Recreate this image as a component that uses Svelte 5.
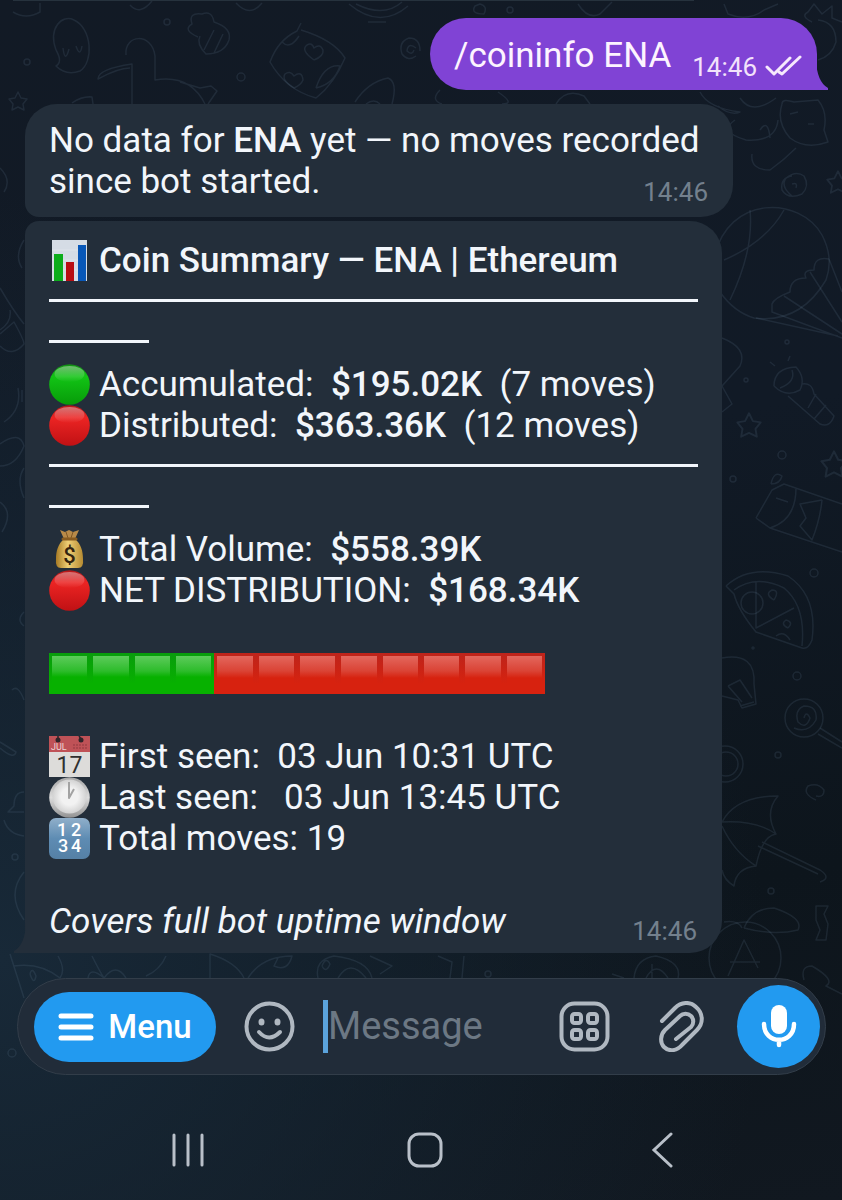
<script>
	const summary = [
		{ icon: 'green', label: 'Accumulated:  ', value: '$195.02K', note: '  (7 moves)' },
		{ icon: 'red', label: 'Distributed:  ', value: '$363.36K', note: '  (12 moves)' }
	];

	const totals = [
		{ icon: 'bag', label: 'Total Volume:  ', value: '$558.39K', note: '' },
		{ icon: 'red', label: 'NET DISTRIBUTION:  ', value: '$168.34K', note: '' }
	];

	const history = [
		{ icon: 'calendar', label: 'First seen:  03 Jun 10:31 UTC', value: '', note: '' },
		{ icon: 'clock', label: 'Last seen:   03 Jun 13:45 UTC', value: '', note: '' },
		{ icon: 'numbers', label: 'Total moves: 19', value: '', note: '' }
	];

	// 4 accumulated, 8 distributed
	const cells = Array.from({ length: 12 }, (_, i) => (i < 4 ? 'up' : 'down'));

	const stars = [
		[18, 101, 1],
		[749, 425, 1.3],
		[838, 182, 1.2],
		[834, 464, 1.4]
	];

	const dots = [
		[27, 62, 3], [167, 22, 3], [241, 77, 4], [510, 10, 3], [782, 455, 4],
		[733, 479, 3], [814, 573, 4], [797, 676, 4], [778, 755, 3], [771, 891, 3],
		[15, 857, 3], [746, 380, 2], [787, 342, 2], [753, 648, 1], [488, 974, 3], [12, 1053, 4]
	];

	let message = '';
</script>

{#snippet emoji(name)}
	<svg class="emoji" viewBox="0 0 41 41" aria-hidden="true">
		{#if name === 'green'}
			<circle cx="20.5" cy="20.5" r="20.3" fill="url(#green-ball)" />
			<ellipse cx="20.5" cy="10" rx="15" ry="8" fill="url(#shine)" />
		{:else if name === 'red'}
			<circle cx="20.5" cy="20.5" r="20.3" fill="url(#red-ball)" />
			<ellipse cx="20.5" cy="10" rx="15" ry="8" fill="url(#shine)" />
		{:else if name === 'chart'}
			<rect x="3" y="0" width="35" height="41" fill="#d5dce5" />
			<path d="M3 10H38M3 20H38M3 30H38" stroke="#dfe4ea" stroke-width="1" />
			<rect x="5" y="14" width="9" height="27" fill="#0cad1b" />
			<rect x="17" y="22" width="8" height="19" fill="#b80d12" />
			<rect x="29" y="5" width="8" height="36" fill="#0757b8" />
		{:else if name === 'bag'}
			<path d="M11 1 16 3 20 1 24 3 30 1 26 10H15Z" fill="#b98a48" />
			<path d="M17 3 19 9M24 3 22 9" stroke="#7f5624" stroke-width="1" />
			<path d="M15 10C9 15 7 22 7 30Q6 39 12 39H29Q35 39 34 30C34 22 32 15 26 10Z" fill="url(#gold)" />
			<path d="M14 10H27" stroke="#8a5c20" stroke-width="3" stroke-linecap="round" />
			<text x="20.5" y="34" text-anchor="middle" font-size="22" font-weight="500" fill="#33230f">$</text>
		{:else if name === 'calendar'}
			<rect width="41" height="41" fill="#dddcda" />
			<rect width="41" height="16" fill="#bf5257" />
			<path d="M24 12H39M24 9H39" stroke="#a8454b" stroke-width="2" stroke-dasharray="2 1" />
			<circle cx="9" cy="4" r="2.5" fill="#302529" />
			<circle cx="32" cy="4" r="2.5" fill="#302529" />
			<path d="M9 3V0M32 3 30 0" stroke="#302529" stroke-width="1.5" />
			<text x="2" y="14" font-size="9" fill="#eed5d5">JUL</text>
			<text x="20.5" y="37" text-anchor="middle" font-size="23" fill="#303030">17</text>
		{:else if name === 'clock'}
			<circle cx="20.5" cy="20.5" r="20.3" fill="url(#rim)" />
			<circle cx="20.5" cy="19.5" r="17" fill="url(#face)" />
			<path d="M20 5V21L25 12" fill="none" stroke="#a3a3a3" stroke-width="2" stroke-linejoin="round" />
		{:else if name === 'numbers'}
			<rect width="41" height="41" rx="7" fill="url(#steel)" />
			<g font-size="18" font-weight="500" fill="#fff" text-anchor="middle">
				<text x="13" y="18">1</text><text x="27" y="18">2</text>
				<text x="14" y="34">3</text><text x="27" y="34">4</text>
			</g>
		{/if}
	</svg>
{/snippet}

{#snippet row(item)}
	<p class="row">
		{@render emoji(item.icon)}
		<span class="text">{item.label}<strong>{item.value}</strong>{item.note}</span>
	</p>
{/snippet}

{#snippet divider()}
	<div class="divider">
		<hr />
		<hr class="short" />
	</div>
{/snippet}

<!-- shared gradients -->
<svg class="defs" width="0" height="0" aria-hidden="true">
	<defs>
		<linearGradient id="green-ball" x2="0" y2="1">
			<stop offset="0" stop-color="#138c14" /><stop offset=".3" stop-color="#12c415" /><stop offset="1" stop-color="#079b09" />
		</linearGradient>
		<linearGradient id="red-ball" x2="0" y2="1">
			<stop offset="0" stop-color="#b3181a" /><stop offset=".3" stop-color="#ec2423" /><stop offset="1" stop-color="#c01114" />
		</linearGradient>
		<linearGradient id="shine" x2="0" y2="1">
			<stop offset="0" stop-color="#fff" stop-opacity=".4" /><stop offset="1" stop-color="#fff" stop-opacity="0" />
		</linearGradient>
		<linearGradient id="gold">
			<stop offset="0" stop-color="#a77a23" /><stop offset=".45" stop-color="#efcf76" /><stop offset="1" stop-color="#b58b31" />
		</linearGradient>
		<linearGradient id="rim" x2="0" y2="1">
			<stop offset="0" stop-color="#a6a6a6" /><stop offset=".5" stop-color="#dcdcdc" /><stop offset="1" stop-color="#929292" />
		</linearGradient>
		<radialGradient id="face">
			<stop offset=".5" stop-color="#f2f2f2" /><stop offset="1" stop-color="#d2d2d2" />
		</radialGradient>
		<linearGradient id="steel" x2="0" y2="1">
			<stop offset="0" stop-color="#90afca" /><stop offset=".5" stop-color="#5e8cb3" /><stop offset="1" stop-color="#5580a5" />
		</linearGradient>
	</defs>
</svg>

<main class="screen">
	<svg class="doodles" viewBox="0 0 842 1200" preserveAspectRatio="xMidYMin slice" aria-hidden="true">
		{#each stars as [x, y, s]}
			<path transform="translate({x} {y}) scale({s})" d="M0-9 3-3 9-2 5 3 6 9 0 6-6 9-5 3-9-2-3-3Z" />
		{/each}
		{#each dots as [x, y, r]}
			<circle cx={x} cy={y} {r} />
		{/each}
		<!-- ghost, duck, bee, pillow -->
		<path d="M13 12Q26 20 40 12V3M130 5Q140 16 152 1M236 3Q250 18 262 3" />
		<path d="M56 50C48 28 62 14 74 20C92 28 94 62 80 71Q66 76 56 66Q63 62 56 50M63 48Q65 64 69 49M76 46Q80 58 82 46" />
		<path d="M132 104V64Q98 69 98 79Q118 68 130 68M126 55C124 34 152 32 155 56V80Q190 74 205 104M180 82 200 88 211 86 217 91 208 104M72 103Q82 96 92 97L93 104" />
		<path d="M198 37Q182 30 192 24Q188 12 202 14Q212 10 214 22Q232 28 229 40Q224 54 206 54Q196 44 200 36M204 50 214 30M214 53 223 34" />
		<path d="M301 23 297 31Q278 40 270 62Q286 90 316 98Q334 84 345 58Q334 40 301 30M282 42Q290 50 299 36M316 88Q324 64 340 66Q334 84 316 88" />
		<path d="M314 60Q300 50 307 45Q312 42 314 48Q320 43 323 50Q324 56 314 60M294 88Q281 80 285 74Q290 70 294 76Q302 70 303 80Q301 85 294 88" />
		<path d="M349 4Q380 30 408 6M356 4Q384 18 402 2M368 22H386M355 102Q368 82 388 78Q398 82 392 104M366 104Q374 98 380 104" />
		<path d="M420 51Q420 38 409 38Q398 42 402 54Q408 62 416 56M416 48Q408 42 407 51Q412 56 414 50" />
		<path d="M475 6Q470 14 484 14Q488 6 480 4ZM578 4Q588 20 600 14L612 2M724 4 728 14Q748 22 764 10L778 4M440 90Q430 100 442 104M498 92Q516 104 502 104M556 104Q566 88 584 96L590 104" />
		<!-- strawberry and cat -->
		<path d="M812 22Q800 16 808 12L814 4 822 14 832 6 832 18 842 22M818 20Q836 22 836 42Q832 56 818 60" />
		<path d="M700 92Q708 108 740 112Q730 116 718 106M740 98Q752 116 776 98M782 104Q782 98 794 102L818 100Q828 112 824 130L828 142Q806 150 790 138Q776 122 782 104M735 120Q718 132 746 140Q776 142 778 120M752 154Q750 170 770 170Q784 160 796 148M760 130Q768 118 770 138M790 114 798 112M808 124H814" />
		<path d="M792 196Q780 186 786 178Q796 170 804 176Q810 186 802 194Q788 200 782 190Q780 178 792 176M792 184Q798 182 796 188" />
		<!-- balloon -->
		<path d="M714 258C728 194 800 196 822 235Q834 258 826 280Q800 324 754 318Q734 312 720 292" />
		<path d="M750 210Q754 250 730 300M784 210Q766 242 724 260M829 259Q814 256 814 270Q802 270 806 278Q790 278 790 292Q774 298 772 304L772 312 842 338M829 259 842 292M810 272 842 322M784 296 842 334M756 318 838 336" />
		<!-- cloud, torch, wrapper -->
		<path d="M722 338Q748 348 740 366L722 386 732 404 722 412M788 361 790 356M770 362 775 366" />
		<path d="M774 386Q774 368 796 367Q806 378 800 390Q786 398 774 386M780 388Q796 382 792 370M802 384Q812 382 814 394L834 416Q830 428 820 424L788 396M816 394 808 408M826 405 814 419" />
		<path d="M756 518 772 490 784 484 842 504M756 518 770 528 842 552M770 528Q796 520 796 488M776 498 788 502M822 500 800 504 806 518 800 526 812 540Q820 520 822 500M771 484Q774 470 782 476 780 484 771 484" />
		<!-- pizza, bulb, lollipop -->
		<path d="M726 586Q750 564 788 576Q818 596 812 640Q808 650 802 648L756 632Q738 610 734 594L726 586M734 590Q756 574 784 588Q806 606 802 646M756 582V628L794 608" />
		<circle cx="752" cy="603" r="11" />
		<path d="M774 600Q764 594 772 590Q780 590 774 600M788 628Q780 624 786 620Q794 622 788 628M776 636Q784 630 790 640" />
		<path d="M722 658Q756 652 754 684L756 704 742 708 738 700 722 696M728 686 740 680 752 698M728 686 742 702M740 706 754 702" />
		<circle cx="804" cy="718" r="19" />
		<path d="M804 718Q806 710 810 718Q806 730 798 722Q794 710 804 706Q818 706 816 720Q808 734 794 728M820 728 842 742M818 734 842 748" />
		<circle cx="725" cy="764" r="18" />
		<circle cx="726" cy="764" r="12" />
		<path d="M816 800Q802 794 808 786Q818 782 824 790Q824 798 816 796" />
		<!-- umbrella, sweet -->
		<path d="M722 822Q736 796 778 796Q764 812 776 834Q762 836 756 866Q734 852 722 826M722 822Q756 820 776 834M756 866Q736 868 734 886Q724 880 722 870M762 842 820 870Q832 878 820 882M758 846 818 874" />
		<path d="M744 928Q752 908 774 908Q804 918 798 930Q774 936 744 928M816 906H828L824 914 828 924 826 940H816L820 930 816 920Z" />
		<circle cx="745" cy="958" r="36" />
		<path d="M728 976 744 940 758 968M730 962H760M804 980Q800 966 812 966Q836 980 826 986L842 994M724 922Q738 920 742 928" />
		<!-- left edge -->
		<path d="M0 168Q12 180 4 192M24 240Q14 256 22 268M0 288Q14 312 24 324M0 334 14 322Q24 340 24 344Q12 358 0 346M0 330Q12 322 10 310M18 388Q22 410 4 422M22 390V402M0 444Q20 430 24 446Q16 466 0 466M24 468Q16 480 24 498M0 502Q14 512 2 532M24 612Q16 620 24 626M12 690Q18 684 24 700M0 742 16 752Q14 760 0 748" />
		<path d="M24 792Q14 792 14 806L8 812 24 812M4 820Q8 834 24 836M24 872Q6 894 24 920" />
		<!-- strip above the composer -->
		<path d="M10 954 24 998M14 966Q40 962 60 978Q66 970 58 956M30 974Q32 966 36 976Q34 986 30 974M88 978Q90 966 104 978Q116 962 126 978M92 956Q100 972 104 978M166 956Q160 970 146 976M210 978V954Q236 962 244 978M248 978Q262 956 292 956Q288 972 274 966L278 958M318 978Q314 960 334 956Q368 960 372 978M338 978Q350 958 366 978M322 966Q326 956 330 964Q326 974 322 966M370 956 392 966 380 974" />
		<path d="M438 956 452 962 450 978M464 956 462 978M612 974 624 978M634 978Q636 958 656 956Q682 962 678 978M646 978Q656 960 668 978M652 978V964" />
	</svg>

	<section class="chat">
		<div class="previous"></div>

		<article class="bubble sent">
			<p class="text">/coininfo ENA</p>
			<time>14:46</time>
			<svg class="checks" viewBox="0 0 37 22" aria-label="Read">
				<path d="M2 12 9 19 25 3M14 17 17 19 35 2" fill="none" stroke="#f6e9fc" stroke-width="3" stroke-linecap="round" stroke-linejoin="round" />
			</svg>
			<svg class="tail" viewBox="0 0 13 30" aria-hidden="true"><path d="M0 0Q1 22 12 28V30H0Z" /></svg>
		</article>

		<article class="bubble received first">
			<p>No data for <strong>ENA</strong> yet — no moves recorded since bot started. <time>14:46</time></p>
		</article>

		<article class="bubble received card">
			<p class="row">
				{@render emoji('chart')}
				<strong>Coin Summary — ENA | Ethereum</strong>
			</p>
			{@render divider()}
			{#each summary as item}
				{@render row(item)}
			{/each}
			{@render divider()}
			{#each totals as item}
				{@render row(item)}
			{/each}

			<div class="bar">
				{#each cells as cell}
					<span class="cell {cell}"></span>
				{/each}
			</div>

			{#each history as item}
				{@render row(item)}
			{/each}

			<footer>
				<em>Covers full bot uptime window</em>
				<time>14:46</time>
			</footer>
			<svg class="tail left" viewBox="0 0 13 30" aria-hidden="true"><path d="M13 0Q12 22 1 28V30H13Z" /></svg>
		</article>
	</section>

	<form class="composer" on:submit|preventDefault>
		<button type="button" class="menu">
			<svg width="36" height="28" viewBox="0 0 36 28" aria-hidden="true">
				<path d="M3 3H33M3 14H33M3 25H33" stroke="#fff" stroke-width="5" stroke-linecap="round" />
			</svg>
			Menu
		</button>
		<button type="button" class="tool" aria-label="Emoji">
			<svg width="51" height="51" viewBox="0 0 51 51" fill="none" stroke="#b0b8c1" stroke-width="4">
				<circle cx="25.5" cy="25.5" r="23" />
				<path d="M15 31Q25 42 36 31" stroke-linecap="round" />
				<g fill="#b0b8c1" stroke="none">
					<ellipse cx="17.5" cy="21" rx="3" ry="3.5" />
					<ellipse cx="33.5" cy="21" rx="3" ry="3.5" />
				</g>
			</svg>
		</button>
		<label class="field">
			<span class="caret"></span>
			<input type="text" placeholder="Message" aria-label="Message" bind:value={message} />
		</label>
		<button type="button" class="tool" aria-label="Commands">
			<svg width="51" height="51" viewBox="0 0 51 51" fill="none" stroke="#b0b8c1" stroke-width="4">
				<rect x="2.5" y="2.5" width="46" height="46" rx="13" />
				<rect x="13" y="13" width="9" height="9" rx="2.5" />
				<rect x="29" y="13" width="9" height="9" rx="2.5" />
				<rect x="13" y="29" width="9" height="9" rx="2.5" />
				<rect x="29" y="29" width="9" height="9" rx="2.5" />
			</svg>
		</button>
		<button type="button" class="tool attach" aria-label="Attach">
			<svg width="45" height="51" viewBox="0 0 45 51" fill="none" stroke="#b0b8c1" stroke-width="4" stroke-linecap="round" stroke-linejoin="round">
				<path d="M3 20 16 7C22 1 31 0 37 6C44 12 45 22 38 29L23 44C18 50 10 51 5 46C1 42 1 34 6 29L21 15C24 12 29 12 32 15C35 18 35 23 32 26L17 38" />
			</svg>
		</button>
		<button type="button" class="mic" aria-label="Voice message">
			<svg width="36" height="43" viewBox="0 0 36 43" aria-hidden="true">
				<rect x="10" y="0" width="16" height="29" rx="8" fill="#fff" />
				<path d="M3 19C3 40 33 40 33 19M18 35V40" fill="none" stroke="#fff" stroke-width="4.5" stroke-linecap="round" />
			</svg>
		</button>
	</form>

	<nav class="system">
		<button type="button" aria-label="Recent apps">
			<svg width="36" height="36" viewBox="0 0 36 36" fill="none" stroke="#b9c0c9" stroke-width="3" stroke-linecap="round">
				<path d="M4 3V33M18 3V33M32 3V33" />
			</svg>
		</button>
		<button type="button" aria-label="Home">
			<svg width="36" height="36" viewBox="0 0 36 36" fill="none" stroke="#b9c0c9" stroke-width="3">
				<rect x="2" y="2" width="32" height="32" rx="10" />
			</svg>
		</button>
		<button type="button" aria-label="Back">
			<svg width="36" height="36" viewBox="0 0 36 36" fill="none" stroke="#b9c0c9" stroke-width="3" stroke-linecap="round">
				<path d="M27 2 10 18 27 34" />
			</svg>
		</button>
	</nav>
</main>

<style>
	:global(body) {
		margin: 0;
		background: #111a24;
	}

	.defs {
		position: absolute;
	}

	.screen {
		position: relative;
		display: flex;
		flex-direction: column;
		min-height: 100vh;
		overflow: hidden;
		font-family: Roboto, sans-serif;
		font-size: 35px;
		line-height: 41px;
		color: #f2f6fb;
		background:
			radial-gradient(circle at 0% 80%, #182938 0%, rgba(24, 41, 56, 0) 60%),
			linear-gradient(170deg, #121a25 0%, #111a26 40%, #0d151c 75%, #111820 100%);
	}

	.doodles {
		position: absolute;
		inset: 0;
		width: 100%;
		height: 100%;
		fill: none;
		stroke: #6f8ba5;
		stroke-opacity: 0.15;
		stroke-width: 1.5;
		stroke-linejoin: round;
	}

	.chat,
	.composer,
	.system {
		position: relative;
	}

	.chat {
		display: flex;
		flex-direction: column;
		align-items: flex-start;
		padding: 0 25px;
	}

	.previous {
		width: 86%;
		height: 1px;
		margin: 0 0 17px -12px;
		background: #26323d;
	}

	p {
		margin: 0;
	}

	strong {
		font-weight: 500;
	}

	.text {
		white-space: pre-wrap;
	}

	time {
		font-size: 26px;
		line-height: 30px;
		color: #73808d;
	}

	.bubble {
		position: relative;
		box-sizing: border-box;
	}

	.sent {
		display: flex;
		align-items: flex-end;
		align-self: flex-end;
		height: 72px;
		padding: 0 15px 8px 24px;
		margin-bottom: 14px;
		border-radius: 36px 36px 0 36px;
		color: #fdf4ff;
		background: #8043d5;
	}

	.sent .text {
		margin-right: 21px;
		padding-bottom: 6px;
	}

	.sent time {
		color: #f3e2fb;
	}

	.checks {
		width: 37px;
		height: 22px;
		margin: 0 0 5px 8px;
	}

	.tail {
		position: absolute;
		right: -12px;
		bottom: 0;
		width: 13px;
		height: 30px;
		fill: #8043d5;
	}

	.tail.left {
		right: auto;
		left: -12px;
		fill: #232e3a;
	}

	.received {
		background: #232e3a;
	}

	.first {
		max-width: 90%;
		width: 708px;
		padding: 16px 25px 10px 24px;
		margin-bottom: 4px;
		border-radius: 32px 32px 32px 14px;
	}

	.first p {
		display: flow-root;
	}

	.first time {
		float: right;
		margin-top: 16px;
	}

	.card {
		max-width: 90%;
		width: 697px;
		padding: 19px 24px 11px;
		border-radius: 14px 32px 32px 0;
	}

	.row {
		display: flex;
		gap: 9px;
	}

	.emoji {
		flex: none;
		width: 41px;
		height: 41px;
	}

	.divider {
		display: flex;
		flex-direction: column;
		gap: 38px;
		height: 65px;
		padding-top: 18px;
	}

	hr {
		width: 100%;
		height: 3px;
		margin: 0;
		border: 0;
		background: #f2f6fb;
	}

	hr.short {
		width: 100px;
	}

	.bar {
		display: flex;
		max-width: 496px;
		height: 41px;
		margin: 42px 0;
	}

	.cell {
		flex: 1;
		box-sizing: border-box;
		border: 3px solid;
		border-bottom: 0;
	}

	.cell.up {
		background: linear-gradient(#5dcb5b 0, #2dbc2b 15px, #07b100 21px);
		border-image: linear-gradient(#089c0c, #07b100 70%) 3;
	}

	.cell.down {
		background: linear-gradient(#e3675d 0, #da4335 15px, #d7220f 22px);
		border-image: linear-gradient(#bd241b, #d7220f 70%) 3;
	}

	footer {
		display: flex;
		justify-content: space-between;
		align-items: flex-end;
		margin-top: 42px;
		padding-right: 1px;
	}

	footer time {
		margin-bottom: -4px;
	}

	.composer {
		display: flex;
		align-items: center;
		height: 95px;
		margin: 25px 16px 0 17px;
		padding: 0 5px 0 16px;
		border: 1px solid #323d49;
		border-radius: 49px;
		background: #212c39;
	}

	button {
		display: flex;
		align-items: center;
		justify-content: center;
		flex: none;
		padding: 0;
		border: 0;
		background: none;
	}

	.menu {
		gap: 14px;
		width: 182px;
		height: 70px;
		margin-right: 28px;
		border-radius: 35px;
		font: 500 33px/41px Roboto, sans-serif;
		color: #fff;
		background: #229af0;
	}

	.field {
		display: flex;
		flex: 1;
		align-items: center;
		min-width: 0;
		margin: 0 28px;
	}

	.caret {
		flex: none;
		width: 5px;
		height: 53px;
		background: #5ba3dc;
	}

	input {
		flex: 1;
		min-width: 0;
		padding: 0;
		border: 0;
		outline: 0;
		font: 38px/45px Roboto, sans-serif;
		color: #f2f6fb;
		background: none;
	}

	input::placeholder {
		color: #6c7884;
		opacity: 1;
	}

	.attach {
		margin: 0 33px 0 49px;
	}

	.mic {
		width: 83px;
		height: 83px;
		border-radius: 50%;
		background: #229af0;
	}

	.system {
		display: grid;
		grid-template-columns: repeat(3, 1fr);
		padding: 57px 62px 32px 70px;
	}
</style>
